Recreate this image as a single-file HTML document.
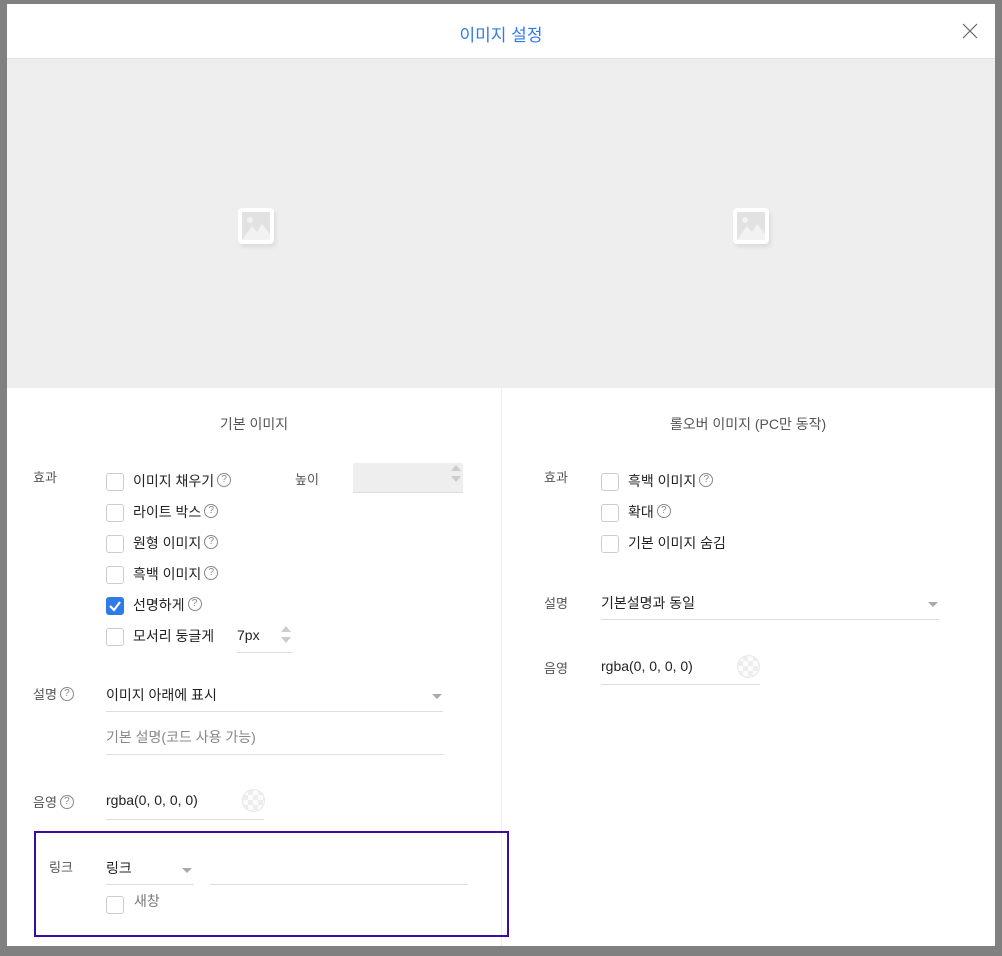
<!DOCTYPE html>
<html><head><meta charset="utf-8"><style>
*{margin:0;padding:0;box-sizing:border-box}
body{width:1002px;height:956px;background:#808080;font-family:"Liberation Sans","Noto Sans CJK KR",sans-serif;position:relative;overflow:hidden;color:#222}
.dlg{position:absolute;left:7px;top:4px;width:988px;height:942px;background:#fff}
.a{position:absolute;white-space:nowrap}
.lbl{font-size:13px;color:#555;margin-top:-3px}
.t{font-size:14px;color:#222;margin-top:-3px}
.cb{position:absolute;width:18px;height:18px;border:1px solid #ccc;border-radius:3px;background:#fff}
.cb.on{background:#2f7be8;border-color:#2f7be8}
.q{display:inline-block;width:14px;height:14px;border:1px solid #888;border-radius:50%;font-size:10px;line-height:12px;text-align:center;color:#888;vertical-align:middle;position:relative;top:-2px;margin-left:3px}
.ln{position:absolute;height:1px;background:#ddd}
.dd{position:absolute;width:0;height:0;border-left:5px solid transparent;border-right:5px solid transparent;border-top:5px solid #aaa}
.chk{position:absolute;width:30px;height:30px;border-radius:50%;background:repeating-conic-gradient(#eeeeee 0 25%,#fcfcfc 0 50%) 0 0/10px 10px;border:1px solid #e8e8e8}
.img{position:absolute;width:36px;height:36px;background:#fff;border-radius:4px;box-shadow:2px 3px 4px rgba(0,0,0,.08)}
.img i{position:absolute;left:4px;top:4px;width:28px;height:28px;background:#e2e2e2;overflow:hidden}
</style></head><body>
<div class="dlg">
 <div class="a" style="left:0;width:988px;top:17px;text-align:center;font-size:17px;color:#2f7be8">이미지 설정</div>
 <svg class="a" style="left:955px;top:19px" width="16" height="16"><path d="M1 1L15 15M15 1L1 15" stroke="#666" stroke-width="1.2"/></svg>
 <div class="a" style="left:0;top:54px;width:988px;height:330px;background:#eee;border-top:1px solid #e2e2e2"></div>
 <div class="img" style="left:231px;top:204px"><i><svg width="28" height="28"><circle cx="8" cy="8" r="3" fill="#f2f2f2"/><path d="M0 28L10 14L15 20L20 12L28 22V28Z" fill="#f2f2f2"/></svg></i></div>
 <div class="img" style="left:726px;top:204px"><i><svg width="28" height="28"><circle cx="8" cy="8" r="3" fill="#f2f2f2"/><path d="M0 28L10 14L15 20L20 12L28 22V28Z" fill="#f2f2f2"/></svg></i></div>
 <div class="a" style="left:494px;top:384px;width:1px;height:558px;background:#eee"></div>

 <div class="a lbl" style="left:0;width:494px;text-align:center;top:413px;font-size:14px">기본 이미지</div>
 <div class="a lbl" style="left:26px;top:466px">효과</div>
 <div class="cb" style="left:99px;top:469px"></div><div class="a t" style="left:126px;top:470px">이미지 채우기<span class="q">?</span></div>
 <div class="cb" style="left:99px;top:500px"></div><div class="a t" style="left:126px;top:501px">라이트 박스<span class="q">?</span></div>
 <div class="cb" style="left:99px;top:531px"></div><div class="a t" style="left:126px;top:532px">원형 이미지<span class="q">?</span></div>
 <div class="cb" style="left:99px;top:562px"></div><div class="a t" style="left:126px;top:563px">흑백 이미지<span class="q">?</span></div>
 <div class="cb on" style="left:99px;top:593px"><svg width="16" height="16" style="position:absolute;left:0;top:0"><path d="M3 8L7 12L13 4" stroke="#fff" stroke-width="2.2" fill="none"/></svg></div><div class="a t" style="left:126px;top:594px">선명하게<span class="q">?</span></div>
 <div class="cb" style="left:99px;top:624px"></div><div class="a t" style="left:126px;top:625px">모서리 둥글게</div>
 <div class="a t" style="left:230px;top:626px">7px</div>
 <div class="ln" style="left:230px;top:648px;width:56px"></div>
 <svg class="a" style="left:274px;top:622px" width="10" height="18"><path d="M0 6L5 0L10 6ZM0 11L10 11L5 17Z" fill="#ccc"/></svg>
 <div class="a lbl" style="left:288px;top:468px">높이</div>
 <div class="a" style="left:346px;top:459px;width:110px;height:30px;background:#eee;border-bottom:1px solid #ddd"></div>
 <svg class="a" style="left:444px;top:461px" width="10" height="18"><path d="M0 6L5 0L10 6ZM0 11L10 11L5 17Z" fill="#ccc"/></svg>

 <div class="a lbl" style="left:26px;top:683px">설명<span class="q">?</span></div>
 <div class="a t" style="left:99px;top:684px">이미지 아래에 표시</div>
 <div class="dd" style="left:425px;top:690px"></div>
 <div class="ln" style="left:99px;top:707px;width:337px"></div>
 <div class="a" style="left:99px;top:723px;font-size:14px;color:#888">기본 설명(코드 사용 가능)</div>
 <div class="ln" style="left:99px;top:750px;width:337px"></div>

 <div class="a lbl" style="left:26px;top:791px">음영<span class="q">?</span></div>
 <div class="a t" style="left:99px;top:791px">rgba(0, 0, 0, 0)</div>
 <div class="chk" style="left:235px;top:785px;width:23px;height:23px"></div>
 <div class="ln" style="left:99px;top:815px;width:158px"></div>

 <div class="a" style="left:27px;top:827px;width:475px;height:106px;border:2px solid #3a0ca3"></div>
 <div class="a lbl" style="left:42px;top:856px">링크</div>
 <div class="a t" style="left:99px;top:857px">링크</div>
 <div class="dd" style="left:175px;top:864px"></div>
 <div class="ln" style="left:99px;top:880px;width:88px"></div>
 <div class="ln" style="left:203px;top:880px;width:258px"></div>
 <div class="cb" style="left:99px;top:892px"></div><div class="a" style="left:127px;top:887px;font-size:14px;color:#777">새창</div>

 <div class="a lbl" style="left:494px;width:494px;text-align:center;top:413px;font-size:14px">롤오버 이미지 (PC만 동작)</div>
 <div class="a lbl" style="left:537px;top:466px">효과</div>
 <div class="cb" style="left:594px;top:469px"></div><div class="a t" style="left:621px;top:470px">흑백 이미지<span class="q">?</span></div>
 <div class="cb" style="left:594px;top:500px"></div><div class="a t" style="left:621px;top:501px">확대<span class="q">?</span></div>
 <div class="cb" style="left:594px;top:531px"></div><div class="a t" style="left:621px;top:532px">기본 이미지 숨김</div>
 <div class="a lbl" style="left:537px;top:592px">설명</div>
 <div class="a t" style="left:594px;top:592px">기본설명과 동일</div>
 <div class="dd" style="left:921px;top:598px"></div>
 <div class="ln" style="left:594px;top:615px;width:338px"></div>
 <div class="a lbl" style="left:537px;top:657px">음영</div>
 <div class="a t" style="left:594px;top:657px">rgba(0, 0, 0, 0)</div>
 <div class="chk" style="left:730px;top:651px;width:23px;height:23px"></div>
 <div class="ln" style="left:594px;top:680px;width:159px"></div>
</div>
</body></html>
